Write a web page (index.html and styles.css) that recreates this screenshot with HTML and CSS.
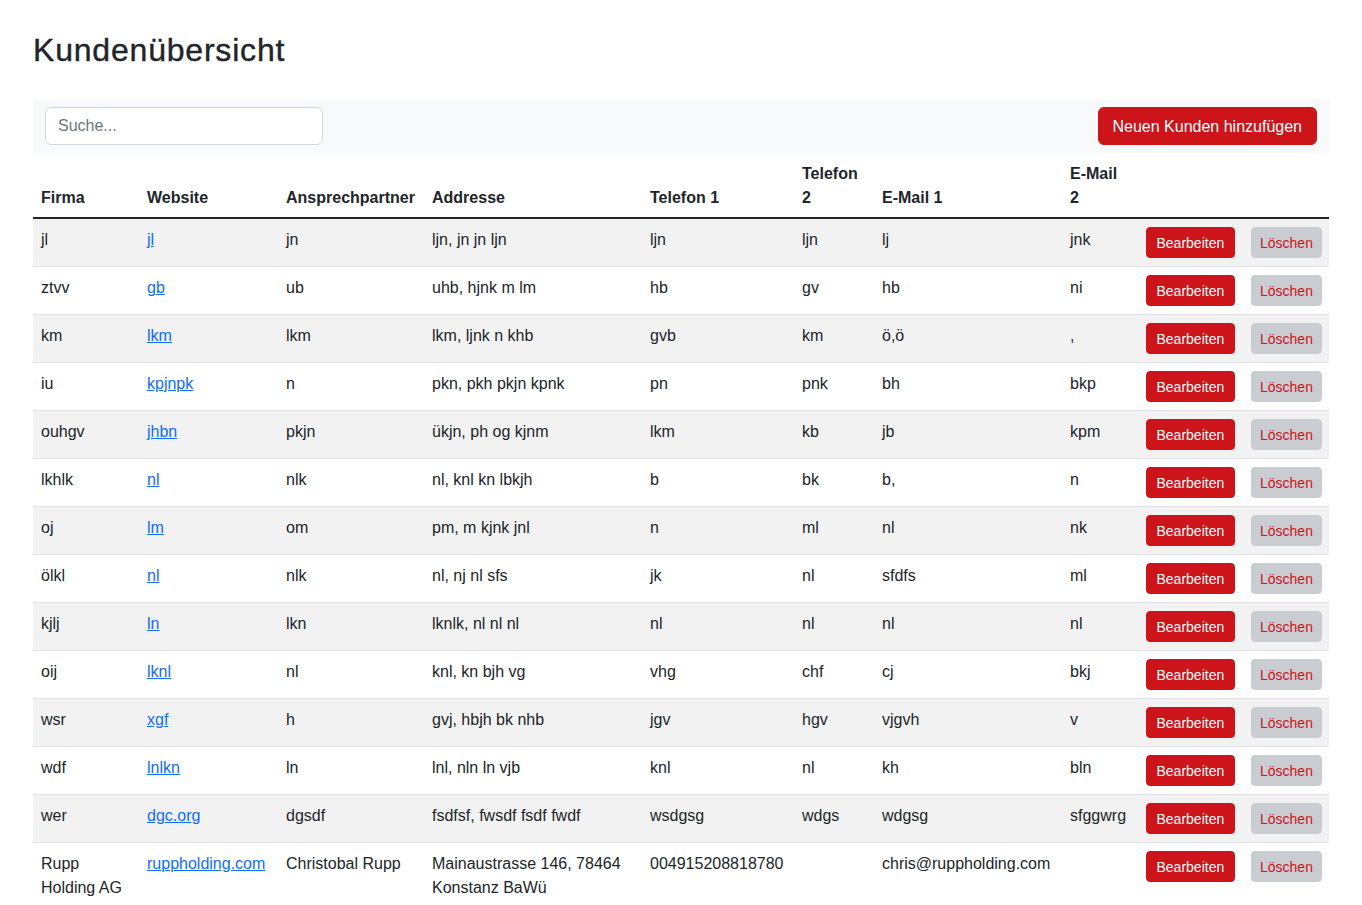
FILE: index.html
```html
<!DOCTYPE html>
<html lang="de">
<head>
<meta charset="utf-8">
<title>Kundenübersicht</title>
<link rel="stylesheet" href="styles.css">
</head>
<body>
<div class="container">
  <h1 class="title">Kundenübersicht</h1>
  <div class="toolbar">
    <input class="search" type="text" placeholder="Suche...">
    <button class="btn btn-primary">Neuen Kunden hinzufügen</button>
  </div>
  <table class="table">
    <colgroup>
      <col class="c-firma"><col class="c-web"><col class="c-ansp"><col class="c-addr"><col class="c-tel1"><col class="c-tel2"><col class="c-mail1"><col class="c-mail2"><col class="c-edit"><col class="c-del">
    </colgroup>
    <thead>
      <tr>
        <th>Firma</th><th>Website</th><th>Ansprechpartner</th><th>Addresse</th><th>Telefon 1</th><th>Telefon<br>2</th><th>E-Mail 1</th><th>E-Mail<br>2</th><th></th><th></th>
      </tr>
    </thead>
    <tbody>
      <tr><td>jl</td><td><a href="#">jl</a></td><td>jn</td><td>ljn, jn jn ljn</td><td>ljn</td><td>ljn</td><td>lj</td><td>jnk</td><td><button class="btn-sm btn-edit">Bearbeiten</button></td><td><button class="btn-sm btn-del">Löschen</button></td></tr>
      <tr><td>ztvv</td><td><a href="#">gb</a></td><td>ub</td><td>uhb, hjnk m lm</td><td>hb</td><td>gv</td><td>hb</td><td>ni</td><td><button class="btn-sm btn-edit">Bearbeiten</button></td><td><button class="btn-sm btn-del">Löschen</button></td></tr>
      <tr><td>km</td><td><a href="#">lkm</a></td><td>lkm</td><td>lkm, ljnk n khb</td><td>gvb</td><td>km</td><td>ö,ö</td><td>,</td><td><button class="btn-sm btn-edit">Bearbeiten</button></td><td><button class="btn-sm btn-del">Löschen</button></td></tr>
      <tr><td>iu</td><td><a href="#">kpjnpk</a></td><td>n</td><td>pkn, pkh pkjn kpnk</td><td>pn</td><td>pnk</td><td>bh</td><td>bkp</td><td><button class="btn-sm btn-edit">Bearbeiten</button></td><td><button class="btn-sm btn-del">Löschen</button></td></tr>
      <tr><td>ouhgv</td><td><a href="#">jhbn</a></td><td>pkjn</td><td>ükjn, ph og kjnm</td><td>lkm</td><td>kb</td><td>jb</td><td>kpm</td><td><button class="btn-sm btn-edit">Bearbeiten</button></td><td><button class="btn-sm btn-del">Löschen</button></td></tr>
      <tr><td>lkhlk</td><td><a href="#">nl</a></td><td>nlk</td><td>nl, knl kn lbkjh</td><td>b</td><td>bk</td><td>b,</td><td>n</td><td><button class="btn-sm btn-edit">Bearbeiten</button></td><td><button class="btn-sm btn-del">Löschen</button></td></tr>
      <tr><td>oj</td><td><a href="#">lm</a></td><td>om</td><td>pm, m kjnk jnl</td><td>n</td><td>ml</td><td>nl</td><td>nk</td><td><button class="btn-sm btn-edit">Bearbeiten</button></td><td><button class="btn-sm btn-del">Löschen</button></td></tr>
      <tr><td>ölkl</td><td><a href="#">nl</a></td><td>nlk</td><td>nl, nj nl sfs</td><td>jk</td><td>nl</td><td>sfdfs</td><td>ml</td><td><button class="btn-sm btn-edit">Bearbeiten</button></td><td><button class="btn-sm btn-del">Löschen</button></td></tr>
      <tr><td>kjlj</td><td><a href="#">ln</a></td><td>lkn</td><td>lknlk, nl nl nl</td><td>nl</td><td>nl</td><td>nl</td><td>nl</td><td><button class="btn-sm btn-edit">Bearbeiten</button></td><td><button class="btn-sm btn-del">Löschen</button></td></tr>
      <tr><td>oij</td><td><a href="#">lknl</a></td><td>nl</td><td>knl, kn bjh vg</td><td>vhg</td><td>chf</td><td>cj</td><td>bkj</td><td><button class="btn-sm btn-edit">Bearbeiten</button></td><td><button class="btn-sm btn-del">Löschen</button></td></tr>
      <tr><td>wsr</td><td><a href="#">xgf</a></td><td>h</td><td>gvj, hbjh bk nhb</td><td>jgv</td><td>hgv</td><td>vjgvh</td><td>v</td><td><button class="btn-sm btn-edit">Bearbeiten</button></td><td><button class="btn-sm btn-del">Löschen</button></td></tr>
      <tr><td>wdf</td><td><a href="#">lnlkn</a></td><td>ln</td><td>lnl, nln ln vjb</td><td>knl</td><td>nl</td><td>kh</td><td>bln</td><td><button class="btn-sm btn-edit">Bearbeiten</button></td><td><button class="btn-sm btn-del">Löschen</button></td></tr>
      <tr><td>wer</td><td><a href="#">dgc.org</a></td><td>dgsdf</td><td>fsdfsf, fwsdf fsdf fwdf</td><td>wsdgsg</td><td>wdgs</td><td>wdgsg</td><td>sfggwrg</td><td><button class="btn-sm btn-edit">Bearbeiten</button></td><td><button class="btn-sm btn-del">Löschen</button></td></tr>
      <tr><td>Rupp Holding AG</td><td><a href="#">ruppholding.com</a></td><td>Christobal Rupp</td><td>Mainaustrasse 146, 78464 Konstanz BaWü</td><td>004915208818780</td><td></td><td>chris@ruppholding.com</td><td></td><td><button class="btn-sm btn-edit">Bearbeiten</button></td><td><button class="btn-sm btn-del">Löschen</button></td></tr>
    </tbody>
  </table>
</div>
</body>
</html>
```
FILE: styles.css
```css
* { box-sizing: border-box; }
html, body { margin: 0; padding: 0; }
body {
  font-family: "Liberation Sans", Arial, sans-serif;
  font-size: 16px;
  line-height: 1.5;
  color: #212529;
  background: #fff;
}
.container {
  width: 1296px;
  margin: 0 auto;
  padding-top: 31px;
}
.title {
  margin: 0 0 30px;
  font-size: 32px;
  line-height: 38px;
  font-weight: 500;
  letter-spacing: 0.8px;
  -webkit-text-stroke: 0.4px currentColor;
  color: #212529;
}
.toolbar {
  display: flex;
  justify-content: space-between;
  align-items: center;
  background: #f8f9fa;
  padding: 8px 12px;
}
.search {
  width: 278px;
  height: 38px;
  padding: 6px 12px;
  font: inherit;
  color: #212529;
  background: #fff;
  border: 1px solid #d3d7db;
  border-radius: 6px;
  outline: none;
}
.search::placeholder { color: #6c757d; }
.btn {
  font: inherit;
  line-height: 24px;
  padding: 7px 14px 5px;
  border: 1px solid transparent;
  border-radius: 6px;
  cursor: pointer;
}
.btn-primary {
  background: #cc1419;
  border-color: #cc1419;
  color: #fff;
}
.table {
  width: 100%;
  border-collapse: collapse;
  table-layout: fixed;
  vertical-align: top;
}
.c-firma { width: 106px; }
.c-web { width: 139px; }
.c-ansp { width: 146px; }
.c-addr { width: 218px; }
.c-tel1 { width: 152px; }
.c-tel2 { width: 80px; }
.c-mail1 { width: 188px; }
.c-mail2 { width: 76px; }
.c-edit { width: 105px; }
.c-del { width: 86px; }
.table th {
  text-align: left;
  vertical-align: bottom;
  font-weight: bold;
  padding: 9px 8px 7px;
  border-bottom: 2px solid #212529;
}
.table td {
  padding: 9px 8px 8px;
  vertical-align: top;
  border-bottom: 1px solid #dee2e6;
}
.table tbody tr:nth-child(odd) td { background: #f2f2f2; }
.table a { color: #0d6efd; text-decoration: underline; }
.btn-sm {
  font-family: inherit;
  font-size: 14px;
  line-height: 21px;
  margin-top: -1px;
  padding: 5px 9.5px 3px;
  border: 1px solid transparent;
  border-radius: 4px;
  cursor: pointer;
  white-space: nowrap;
}
.btn-edit {
  background: #cc1419;
  border-color: #cc1419;
  color: #fff;
}
.btn-del {
  padding: 5px 8px 3px;
  background: #c9cdd1;
  border-color: #c9cdd1;
  color: #cc1419;
}
```
